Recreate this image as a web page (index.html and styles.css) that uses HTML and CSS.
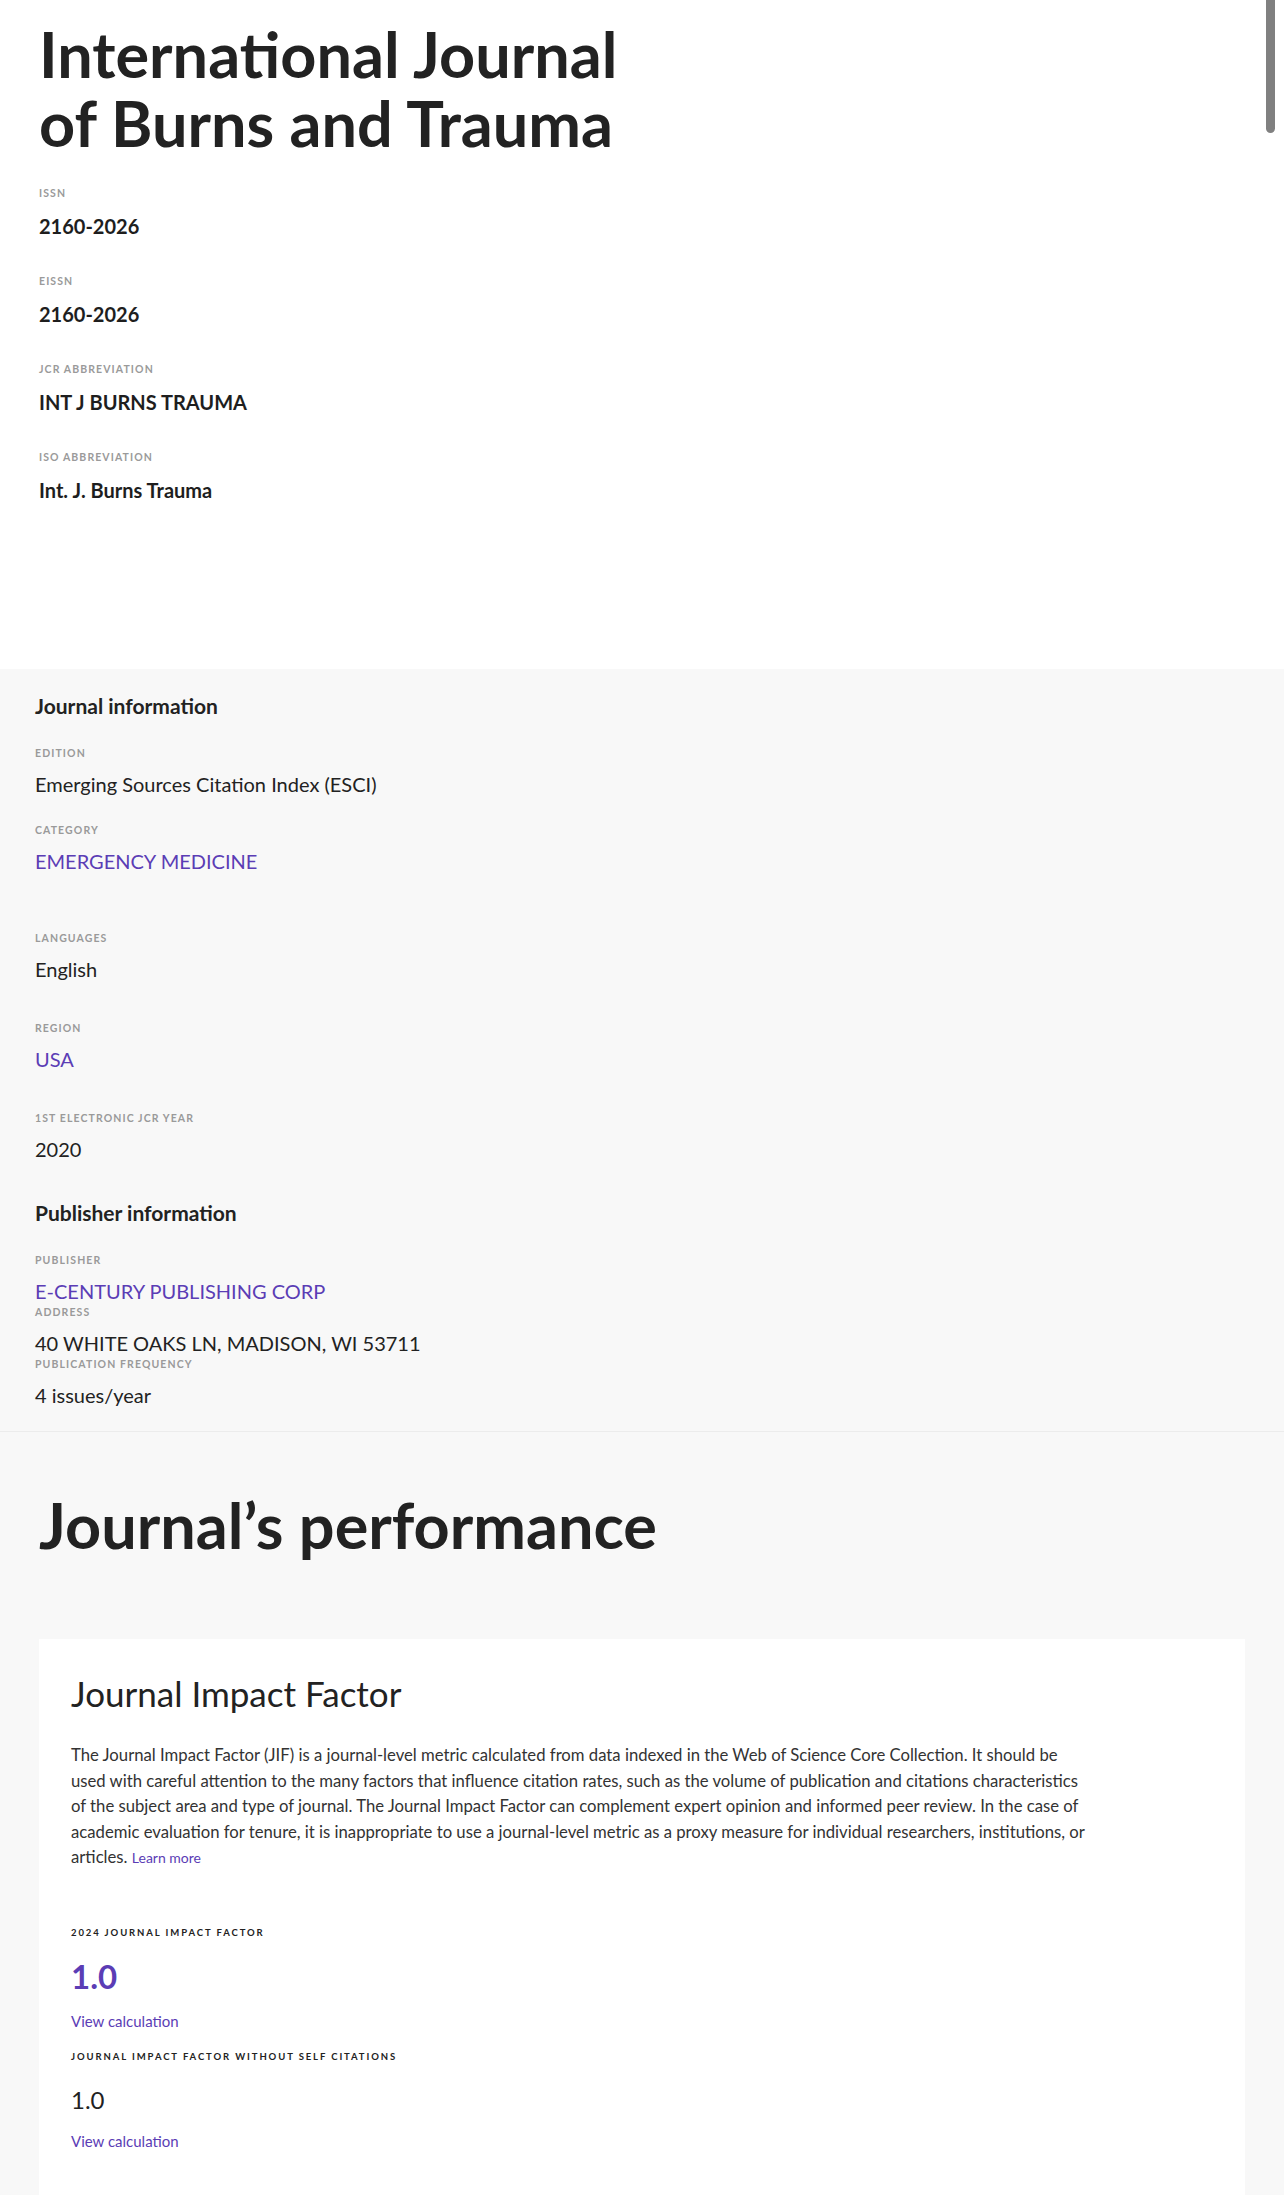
FILE: index.html
```html
<!DOCTYPE html>
<html lang="en">
<head>
    <meta charset="UTF-8">
    <meta name="viewport" content="width=device-width, initial-scale=1.0">
    <title>International Journal of Burns and Trauma</title>
    <link rel="stylesheet" href="styles.css">
</head>
<body>

<div class="scroll-thumb"></div>

<header class="journal-head">
    <h1>International Journal<br>of Burns and Trauma</h1>

    <div class="ids">
        <div class="id-item">
            <span class="label">ISSN</span>
            <span class="id-value">2160-2026</span>
        </div>
        <div class="id-item">
            <span class="label">EISSN</span>
            <span class="id-value">2160-2026</span>
        </div>
        <div class="id-item">
            <span class="label">JCR Abbreviation</span>
            <span class="id-value">INT J BURNS TRAUMA</span>
        </div>
        <div class="id-item">
            <span class="label">ISO Abbreviation</span>
            <span class="id-value">Int. J. Burns Trauma</span>
        </div>
    </div>
</header>

<section class="info">
    <h2>Journal information</h2>

    <div class="field">
        <span class="label">Edition</span>
        <span class="field-value">Emerging Sources Citation Index (ESCI)</span>
    </div>
    <div class="field field-category">
        <span class="label">Category</span>
        <a class="field-value link" href="#">EMERGENCY MEDICINE</a>
    </div>
    <div class="field field-spaced">
        <span class="label">Languages</span>
        <span class="field-value">English</span>
    </div>
    <div class="field field-spaced">
        <span class="label">Region</span>
        <a class="field-value link" href="#">USA</a>
    </div>
    <div class="field field-spaced">
        <span class="label">1st Electronic JCR Year</span>
        <span class="field-value">2020</span>
    </div>

    <h2 class="publisher-title">Publisher information</h2>

    <div class="field">
        <span class="label">Publisher</span>
        <a class="field-value link" href="#">E-CENTURY PUBLISHING CORP</a>
    </div>
    <div class="field field-tight">
        <span class="label">Address</span>
        <span class="field-value">40 WHITE OAKS LN, MADISON, WI 53711</span>
    </div>
    <div class="field field-tight">
        <span class="label">Publication frequency</span>
        <span class="field-value">4 issues/year</span>
    </div>
</section>

<section class="performance">
    <h2 class="perf-title">Journal’s performance</h2>

    <div class="card">
        <h3>Journal Impact Factor</h3>
        <p class="card-text">
            The Journal Impact Factor (JIF) is a journal-level metric calculated from data indexed in the Web of Science Core Collection. It should be<br>
            used with careful attention to the many factors that influence citation rates, such as the volume of publication and citations characteristics<br>
            of the subject area and type of journal. The Journal Impact Factor can complement expert opinion and informed peer review. In the case of<br>
            academic evaluation for tenure, it is inappropriate to use a journal-level metric as a proxy measure for individual researchers, institutions, or<br>
            articles.
            <a class="learn-more" href="#">Learn more</a>
        </p>

        <div class="metric">
            <span class="metric-label">2024 Journal Impact Factor</span>
            <span class="metric-value metric-main">1.0</span>
            <a class="view-calc" href="#">View calculation</a>
        </div>
        <div class="metric metric-second">
            <span class="metric-label">Journal Impact Factor without self citations</span>
            <span class="metric-value">1.0</span>
            <a class="view-calc" href="#">View calculation</a>
        </div>
    </div>
</section>

</body>
</html>
```

FILE: styles.css
```css
body {
    font-family: Lato, "Noto Sans", sans-serif;
    margin: 0;
    padding: 0;
    color: #222;
    background-color: #f8f8f8;
}

a {
    text-decoration: none;
}

.scroll-thumb {
    position: fixed;
    top: 0;
    right: 9px;
    width: 9px;
    height: 133px;
    background-color: #808080;
    border-radius: 0 0 5px 5px;
}

.label {
    display: block;
    font-size: 10.5px;
    line-height: 14px;
    font-weight: 700;
    letter-spacing: 1.1px;
    text-transform: uppercase;
    color: #9a9a9a;
}

/* cabecera blanca */
.journal-head {
    background-color: white;
    padding: 19px 39px 165px;
}

.journal-head h1 {
    margin: 0 0 29px;
    font-size: 63px;
    line-height: 69px;
    font-weight: 700;
    color: #222;
}

.ids {
    display: flex;
    flex-direction: column;
    align-items: flex-start;
    gap: 34px;
}

.id-item {
    display: flex;
    flex-direction: column;
    align-items: flex-start;
    gap: 12px;
}

.id-value {
    font-size: 20px;
    line-height: 28px;
    font-weight: 700;
    color: #1e1e1e;
}

/* informacion */
.info {
    padding: 23px 35px 23px;
    border-bottom: 1px solid #ececec;
}

.info h2 {
    margin: 0;
    font-size: 21px;
    line-height: 28px;
    font-weight: 700;
    color: #222;
}

.info .publisher-title {
    margin-top: 37px;
}

.field {
    display: flex;
    flex-direction: column;
    align-items: flex-start;
    gap: 11px;
    margin-top: 26px;
}

.field-category {
    padding-bottom: 18px;
}

.field-spaced {
    margin-top: 39px;
}

.field-tight {
    margin-top: 1px;
}

.field-value {
    font-size: 20px;
    line-height: 26px;
    color: #222;
}

.link {
    color: #5b3db5;
}

/* rendimiento */
.performance {
    padding: 58px 39px 40px;
}

.perf-title {
    margin: 0 0 80px;
    font-size: 63px;
    line-height: 69px;
    font-weight: 700;
    color: #222;
}

.card {
    background-color: white;
    padding: 32px 32px 60px;
}

.card h3 {
    margin: 0;
    font-size: 35px;
    line-height: 44px;
    font-weight: 400;
    color: #222;
}

.card-text {
    margin: 28px 0 55px;
    max-width: 1070px;
    font-size: 16.7px;
    line-height: 25.5px;
    color: #333;
}

.learn-more {
    font-size: 14px;
    color: #5b3db5;
}

.metric {
    display: flex;
    flex-direction: column;
    align-items: flex-start;
}

.metric-second {
    margin-top: 19px;
}

.metric-label {
    font-size: 9.5px;
    line-height: 14px;
    font-weight: 700;
    letter-spacing: 1.9px;
    text-transform: uppercase;
    color: #222;
}

.metric-value {
    margin-top: 20px;
    font-size: 24px;
    line-height: 32px;
    color: #222;
}

.metric-main {
    margin-top: 16px;
    font-size: 33px;
    line-height: 40px;
    font-weight: 700;
    color: #5b3db5;
}

.view-calc {
    margin-top: 15px;
    font-size: 15px;
    line-height: 20px;
    color: #5b3db5;
}
```
